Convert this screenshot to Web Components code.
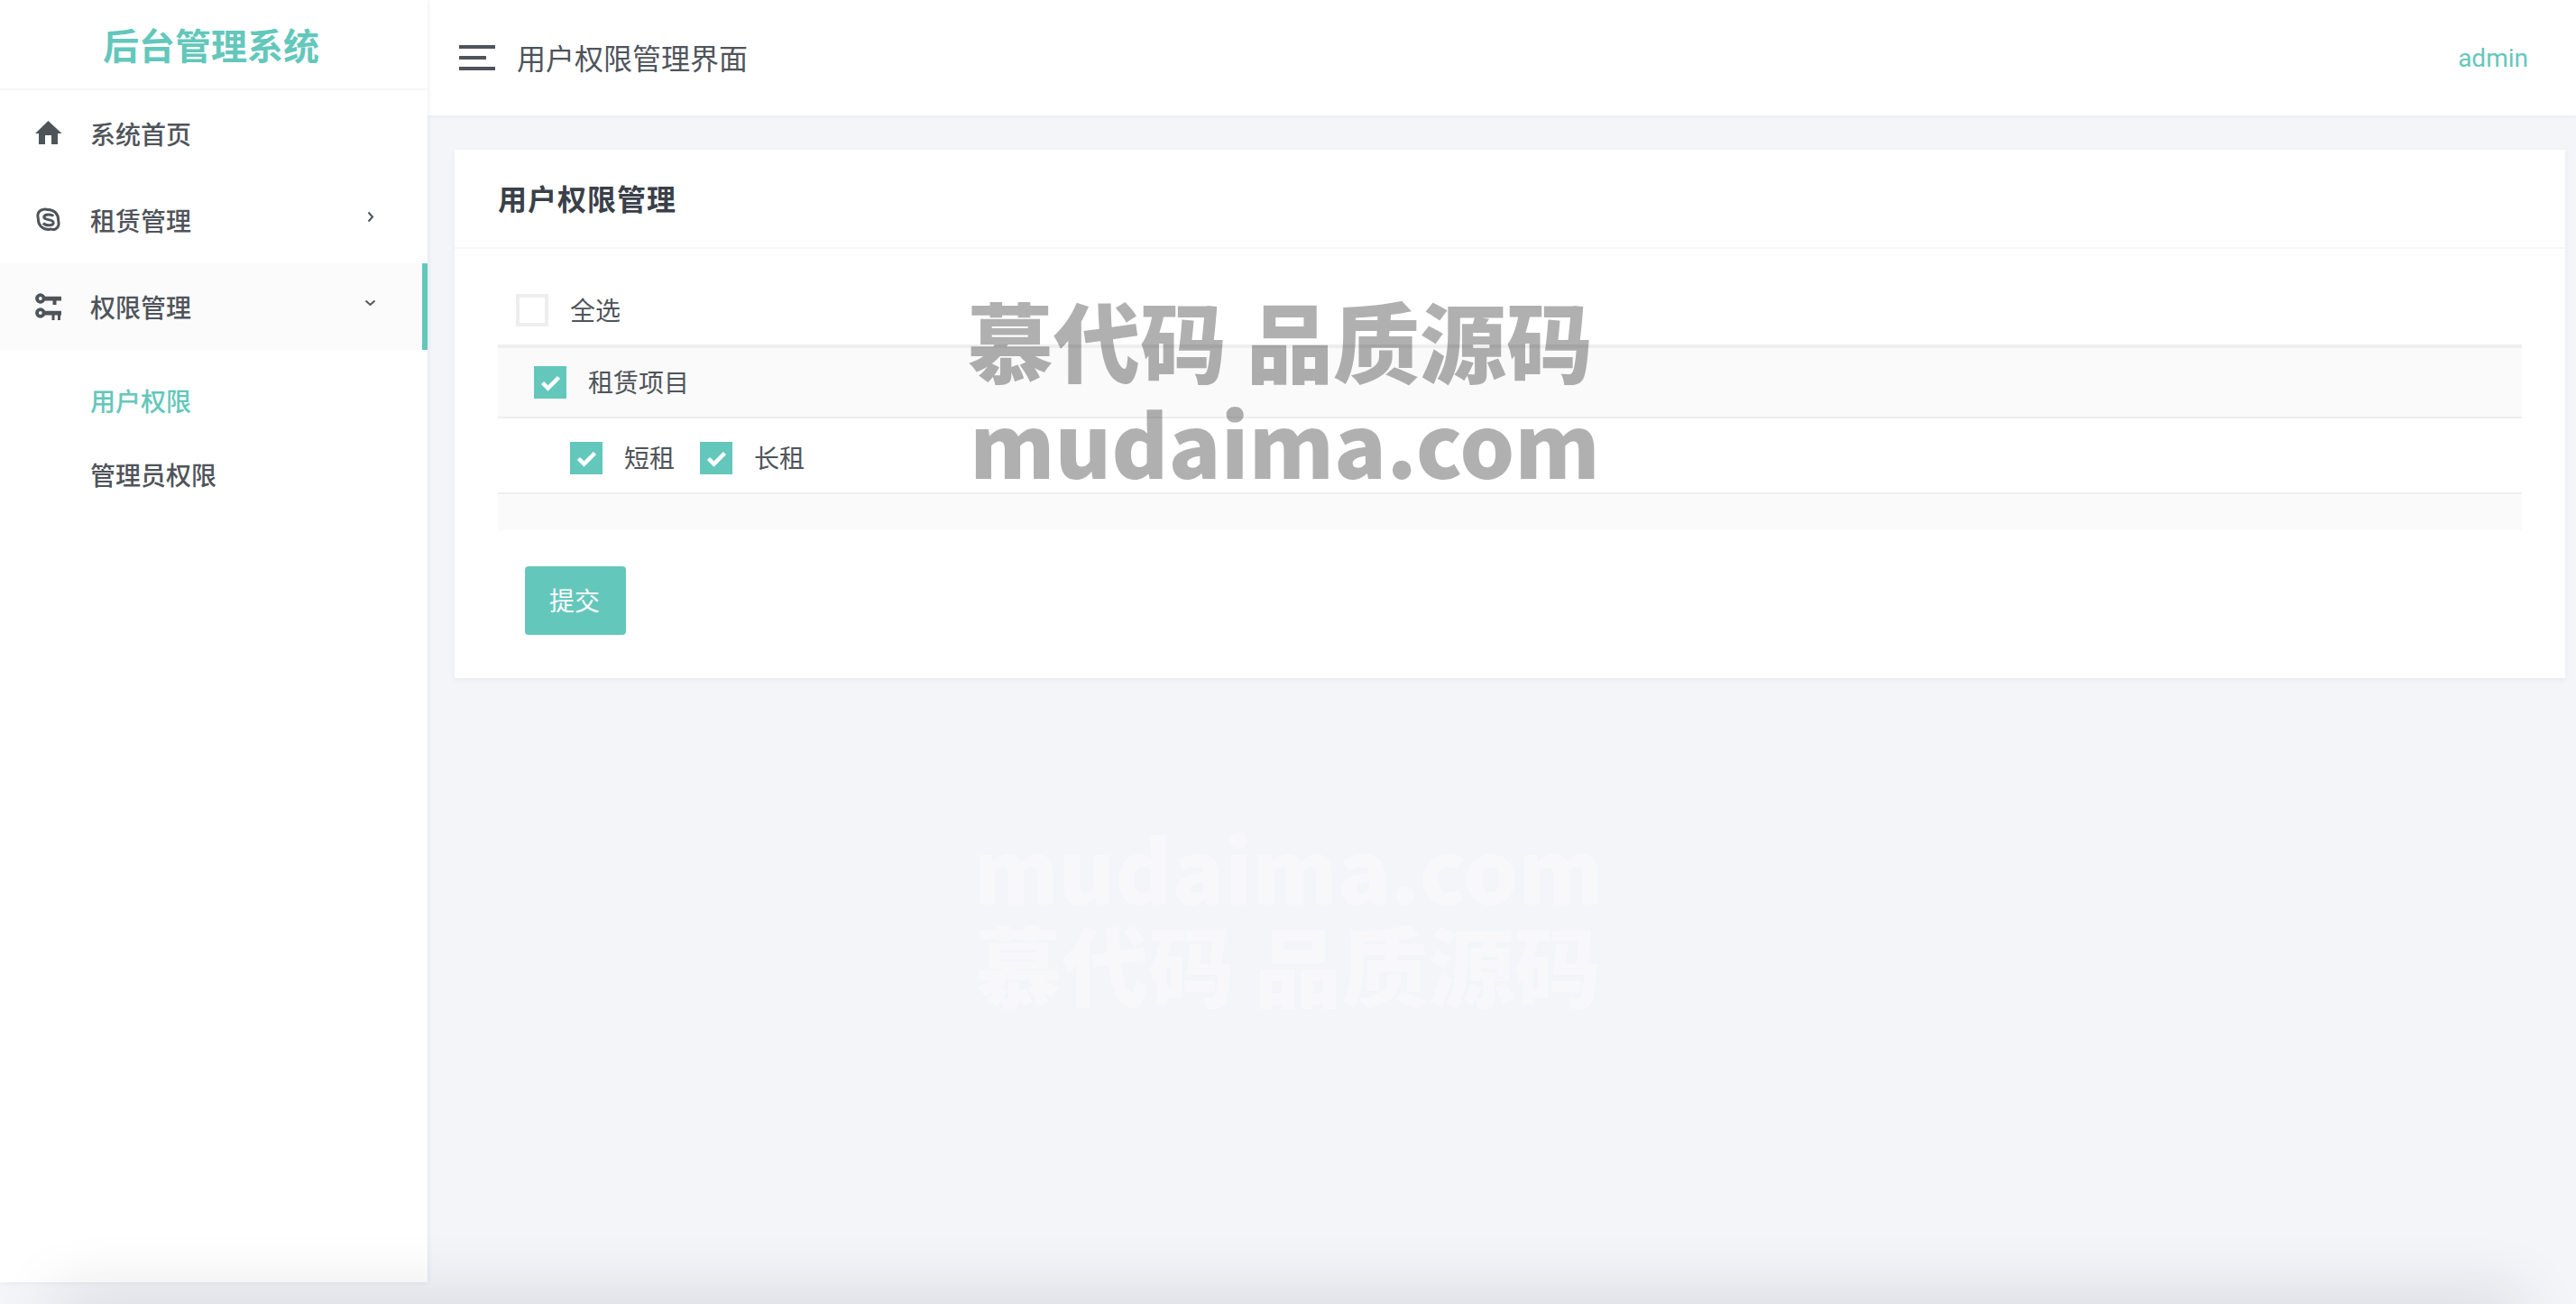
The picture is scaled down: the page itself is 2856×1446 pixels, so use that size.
<!DOCTYPE html>
<html lang="zh">
<head>
<meta charset="utf-8">
<title>后台管理系统</title>
<style>
  html, body { margin: 0; height: 100%; }
  body {
    font-family: "Noto Sans CJK SC", Roboto, sans-serif;
    background: #f4f5f9;
    color: #4f545b;
    overflow: hidden;
  }
</style>
</head>
<body>
<admin-app>
  <side-bar slot="side" title-text="后台管理系统">
    <side-item label="系统首页" icon="home"></side-item>
    <side-item label="租赁管理" icon="skype" arrow="right"></side-item>
    <side-item label="权限管理" icon="key" arrow="down" active></side-item>
    <sub-item current>用户权限</sub-item>
    <sub-item>管理员权限</sub-item>
  </side-bar>
  <top-bar slot="top" heading="用户权限管理界面" user="admin"></top-bar>
  <perm-card heading="用户权限管理">
    <perm-row kind="first"><check-box>全选</check-box></perm-row>
    <perm-row kind="group"><check-box checked>租赁项目</check-box></perm-row>
    <perm-row kind="items">
      <check-box checked>短租</check-box>
      <check-box checked>长租</check-box>
    </perm-row>
    <perm-row kind="empty"></perm-row>
    <submit-btn slot="footer">提交</submit-btn>
  </perm-card>
</admin-app>
<water-mark></water-mark>
<bottom-shade></bottom-shade>

<script>
const ICONS = {
  home: `<path fill="currentColor" d="M14.5 1 L29.5 15 L25 15 L25 27 L18 27 L18 17 L11 17 L11 27 L4 27 L4 15 L0 15 Z"/>`,
  skype: `<path fill="none" stroke="currentColor" stroke-width="3" d="M8.5 3.5 C10.5 2.6 12.5 3.4 14.5 3.4 C20.8 3.4 25.6 8.2 25.6 14.5 C25.6 16.5 26.6 18.5 25.8 21 C24.8 24.5 21.2 26.4 17.8 25.2 C16.5 24.8 16 25.4 14.5 25.4 C8.2 25.4 3.4 20.6 3.4 14.5 C3.4 12.5 2.6 11 3 8.8 C3.5 6.2 6 4 8.5 3.5 Z"/><path fill="none" stroke="currentColor" stroke-width="3" d="M20 10.8 C18.5 8.2 9.8 8 9.8 11.8 C9.8 15.8 20.2 13.4 20.2 18 C20.2 21.8 11 21.6 9 18.4"/>`,
  key: `<g fill="none" stroke="currentColor" stroke-width="3.8"><circle cx="5.8" cy="6" r="3.8"/><circle cx="5.8" cy="22" r="3.8"/></g><path fill="currentColor" d="M9.5 3.8 H29 V8.4 H23.5 V13 H19.5 V8.4 H9.5 Z M9.5 19.8 H29 V24.4 H28 V30 H25 V24.4 H21.5 V30 H18.5 V24.4 H9.5 Z"/>`
};

class AdminApp extends HTMLElement {
  constructor() {
    super();
    this.attachShadow({ mode: "open" }).innerHTML = `
      <style>
        :host { display: grid; grid-template-columns: 474px 1fr; grid-template-rows: 128px auto; height: 1422px; }
        .side { grid-row: 1 / 3; position: relative; z-index: 2; }
        .main { padding: 38px 12px 0 30px; }
      </style>
      <div class="side"><slot name="side"></slot></div>
      <slot name="top"></slot>
      <div class="main"><slot></slot></div>`;
  }
}

class SideBar extends HTMLElement {
  constructor() {
    super();
    this.attachShadow({ mode: "open" }).innerHTML = `
      <style>
        :host { display: block; height: 100%; background: #fff; box-shadow: 0 0 6px rgba(40,50,80,.1); }
        .logo {
          height: 100px; box-sizing: border-box; border-bottom: 2px solid #f7f7f8;
          display: flex; align-items: center; justify-content: center;
          padding: 0 6px 0 0;
          font-size: 40px; font-weight: 700; color: #64c7bb;
        }
      </style>
      <div class="logo">${this.getAttribute("title-text")}</div>
      <slot></slot>`;
  }
}

class SideItem extends HTMLElement {
  constructor() {
    super();
    const arrows = {
      right: `<svg width="8" height="13" viewBox="0 0 8 13"><path d="M1.5 1.5 L6 6.5 L1.5 11.5" fill="none" stroke="currentColor" stroke-width="2"/></svg>`,
      down: `<svg width="13" height="8" viewBox="0 0 13 8"><path d="M1.5 1.5 L6.5 6 L11.5 1.5" fill="none" stroke="currentColor" stroke-width="2"/></svg>`
    };
    const arrow = this.getAttribute("arrow");
    this.attachShadow({ mode: "open" }).innerHTML = `
      <style>
        :host { display: flex; align-items: center; height: 96px; padding-left: 39px; font-size: 28px; font-weight: 500; color: #4f545b; box-sizing: border-box; }
        :host([active]) { background: #fbfbfc; border-right: 6px solid #64c7bb; }
        svg.icon { width: 30px; height: 30px; margin-right: 31px; }
        .arrow { margin-left: auto; margin-right: 57px; display: flex; width: 13px; justify-content: center; transform: translateY(-4px); }
        :host([active]) .arrow { margin-right: 51px; }
      </style>
      <svg class="icon" viewBox="0 0 30 30">${ICONS[this.getAttribute("icon")]}</svg>
      <span>${this.getAttribute("label")}</span>
      ${arrow ? `<span class="arrow">${arrows[arrow]}</span>` : ""}`;
  }
}

class SubItem extends HTMLElement {
  constructor() {
    super();
    this.attachShadow({ mode: "open" }).innerHTML = `
      <style>
        :host { display: flex; align-items: center; height: 82px; padding-left: 100px; font-size: 28px; font-weight: 500; color: #4f545b; }
        :host([current]) { color: #64c7bb; margin-top: 15px; }
      </style>
      <slot></slot>`;
  }
}

class TopBar extends HTMLElement {
  constructor() {
    super();
    this.attachShadow({ mode: "open" }).innerHTML = `
      <style>
        :host { display: flex; align-items: center; height: 128px; background: #fff; padding: 0 53px 0 35px; box-shadow: 0 1px 4px rgba(40,50,80,.05); }
        .burger { display: flex; flex-direction: column; gap: 8px; width: 40px; margin-right: 24px; }
        .burger i { display: block; height: 4px; background: #4f545b; }
        .burger i:nth-child(2) { width: 30px; }
        h1 { margin: 0 0 3px; font-size: 32px; font-weight: 400; color: #4f545b; }
        .user { margin-left: auto; font: 400 28px Roboto, sans-serif; color: #64c7bb; }
      </style>
      <div class="burger"><i></i><i></i><i></i></div>
      <h1>${this.getAttribute("heading")}</h1>
      <span class="user">${this.getAttribute("user")}</span>`;
  }
}

class PermCard extends HTMLElement {
  constructor() {
    super();
    this.attachShadow({ mode: "open" }).innerHTML = `
      <style>
        :host { display: block; background: #fff; box-shadow: 0 2px 6px rgba(40,50,80,.06); height: 586px; box-sizing: border-box; }
        h2 { margin: 0; height: 110px; box-sizing: border-box; border-bottom: 2px solid #f5f6f8; padding: 0 0 3px 48px;
             display: flex; align-items: center; font-size: 32px; font-weight: 600; color: #3a4049; letter-spacing: 1px; }
        .body { padding: 30px 48px 0 48px; }
        .foot { padding: 40px 0 0 78px; }
      </style>
      <h2>${this.getAttribute("heading")}</h2>
      <div class="body"><slot></slot></div>
      <div class="foot"><slot name="footer"></slot></div>`;
  }
}

class PermRow extends HTMLElement {
  constructor() {
    super();
    this.attachShadow({ mode: "open" }).innerHTML = `
      <style>
        :host { display: flex; align-items: center; box-sizing: border-box; }
        :host([kind="first"]) { height: 80px; padding: 0 20px 0; border-bottom: 4px solid #eeeeee; }
        :host([kind="group"]) { height: 78px; padding-left: 40px; background: #fafafa; border-bottom: 2px solid #eeeeee; }
        :host([kind="items"]) { height: 84px; padding: 6px 0 0 80px; gap: 28px; border-bottom: 2px solid #eeeeee; }
        :host([kind="empty"]) { height: 40px; background: #fafafa; }
      </style>
      <slot></slot>`;
  }
}

class CheckBox extends HTMLElement {
  constructor() {
    super();
    const tick = this.hasAttribute("checked")
      ? `<svg width="36" height="36" viewBox="0 0 36 36"><path d="M9.5 18.5 L15.5 24.5 L27.5 12.5" fill="none" stroke="#fff" stroke-width="4.5"/></svg>` : "";
    this.attachShadow({ mode: "open" }).innerHTML = `
      <style>
        :host { display: inline-flex; align-items: center; gap: 24px; font-size: 28px; color: #4f545b; }
        .box { width: 36px; height: 36px; box-sizing: border-box; border: 4px solid #eeeeee; background: #fff; }
        :host([checked]) .box { border: 0; background: #64c7bb; }
        svg { display: block; }
        .txt { padding-bottom: 2px; }
      </style>
      <span class="box">${tick}</span>
      <span class="txt"><slot></slot></span>`;
  }
}

class SubmitBtn extends HTMLElement {
  constructor() {
    super();
    this.attachShadow({ mode: "open" }).innerHTML = `
      <style>
        :host { display: inline-flex; align-items: center; justify-content: center; width: 112px; height: 76px; box-sizing: border-box; padding: 0 2px 2px 0;
                background: #64c7bb; color: #fff; border-radius: 4px; font-size: 28px; }
      </style>
      <slot></slot>`;
  }
}

class WaterMark extends HTMLElement {
  constructor() {
    super();
    this.attachShadow({ mode: "open" }).innerHTML = `
      <style>
        :host { position: absolute; inset: 0; pointer-events: none; z-index: 5; font-family: "Noto Sans CJK SC", sans-serif; font-weight: 900; white-space: nowrap; }
        div { position: absolute; line-height: 1; font-size: 96px; }
        .dark { color: rgba(0,0,0,.31); }
        .light { color: rgba(255,255,255,.35); }
      </style>
      <div class="dark" style="left:1072px;top:328px">慕代码 品质源码</div>
      <div class="dark" style="left:1075px;top:442px">mudaima.com</div>
      <div class="light" style="left:1079px;top:914px">mudaima.com</div>
      <div class="light" style="left:1081px;top:1020px">慕代码 品质源码</div>`;
  }
}

class BottomShade extends HTMLElement {
  constructor() {
    super();
    this.attachShadow({ mode: "open" }).innerHTML = `
      <style>
        :host { position: absolute; left: 80px; right: 80px; top: 1456px; height: 10px; z-index: 6;
                box-shadow: 0 0 70px 20px rgba(30,30,50,.14); }
      </style>`;
  }
}

customElements.define("admin-app", AdminApp);
customElements.define("side-bar", SideBar);
customElements.define("side-item", SideItem);
customElements.define("sub-item", SubItem);
customElements.define("top-bar", TopBar);
customElements.define("perm-card", PermCard);
customElements.define("perm-row", PermRow);
customElements.define("check-box", CheckBox);
customElements.define("submit-btn", SubmitBtn);
customElements.define("water-mark", WaterMark);
customElements.define("bottom-shade", BottomShade);
</script>
</body>
</html>
